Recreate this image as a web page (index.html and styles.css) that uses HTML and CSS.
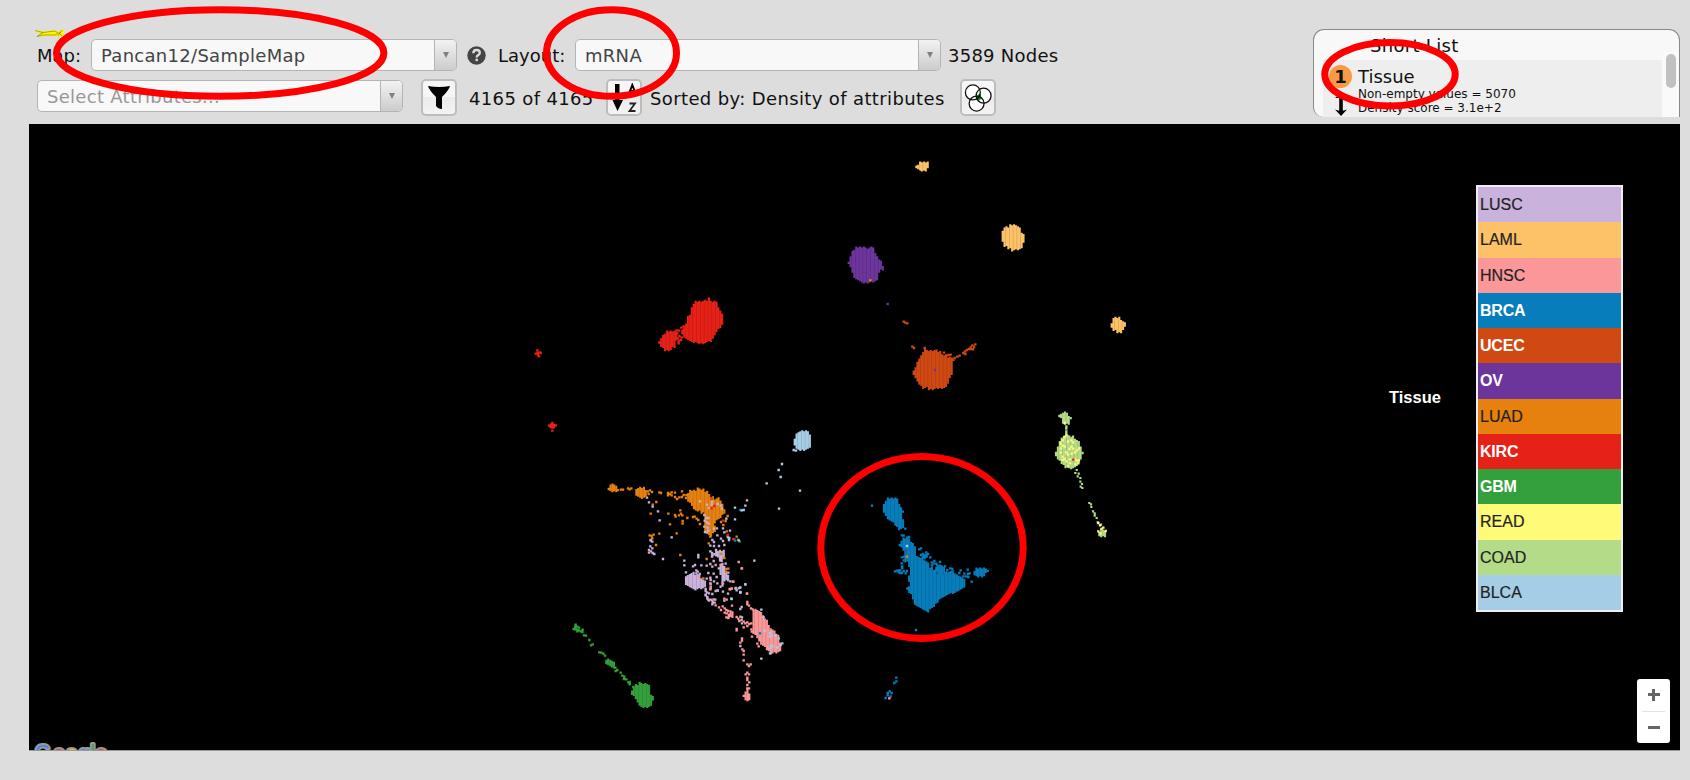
FILE: index.html
```html
<!DOCTYPE html>
<html lang="en">
<head>
<meta charset="utf-8">
<title>Tumor Map</title>
<link rel="stylesheet" href="styles.css">
</head>
<body>
<header class="header">
  <div class="controls">
    <svg class="logo" width="29" height="9" viewBox="0 0 29 9"><path d="M0 .5 8 2.500 20 1 23 3 27 0 29 1 28 7 24 8 20 7 8 7 2 8.500 5 5Z" fill="#fbf500"/><path d="M0 1.500 8 3.500 2 7.500 8 6 20 6 26 3M8 3.500 20 2 23 4M23 7 27 1M24 4 27 7" fill="none" stroke="#77751b" stroke-width=".6"/></svg>
    <div class="row">
      <span class="label label-map">Map:</span>
      <div class="select"><span class="value">Pancan12/SampleMap</span><span class="trigger"><i class="caret"></i></span></div>
      <svg class="help" width="19" height="19" viewBox="0 0 19 19"><circle cx="9.500" cy="9.500" r="9.200" fill="#454545"/><path d="M6.300 7.200Q6.300 4 9.600 4 12.800 4 12.800 6.700 12.800 8.200 11 9.200 9.700 10 9.700 11.400" fill="none" stroke="#ddd" stroke-width="2.300"/><path d="M8.500 12.700h2.400v2.400H8.500z" fill="#ddd"/></svg>
      <span class="label label-layout">Layout:</span>
      <div class="select"><span class="value">mRNA</span><span class="trigger"><i class="caret"></i></span></div>
      <span class="label nodes">3589 Nodes</span>
    </div>
    <div class="row row-attributes">
      <div class="select"><span class="value placeholder">Select Attributes...</span><span class="trigger"><i class="caret"></i></span></div>
      <div class="button filter"><svg width="24" height="25" viewBox="0 0 24 25"><path d="M1 1Q12 3 23 1 22 5 15 12V24Q11 24 9 21V12Q2 5 1 1Z"/></svg></div>
      <span class="label count">4165 of 4165</span>
      <div class="button"><svg width="28" height="30" viewBox="0 0 28 30"><path d="M5 1h4.500v16h3.500L7.500 28 2.500 17H5z"/><path d="M19 10.500 22.300 2 25.600 10.500M20 8h4.600" fill="none" stroke="#000" stroke-width="2"/><path d="M19.500 20.500h5.500L19.500 28h6" fill="none" stroke="#222" stroke-width="1.800"/></svg></div>
      <span class="label sorted">Sorted by: Density of attributes</span>
      <div class="button"><svg width="28" height="28" viewBox="0 0 30 30"><g fill="#fff"><circle cx="9.500" cy="9" r="8"/><circle cx="21" cy="12.500" r="8"/><circle cx="13.500" cy="21" r="8"/></g><path d="M12.500 13.500 17.500 10 19 15.500 15 18.500Z" fill="#0a960f"/><g fill="none" stroke="#111" stroke-width="1.400"><circle cx="9.500" cy="9" r="8"/><circle cx="21" cy="12.500" r="8"/><circle cx="13.500" cy="21" r="8"/></g></svg></div>
    </div>
  </div>
  <section class="shortlist">
    <h2 class="shortlist-title">Short List</h2>
    <div class="entry">
      <div class="rank"><span class="badge">1</span><svg width="14" height="22" viewBox="0 0 14 22"><path d="M7 2v15" stroke="#000" stroke-width="3.600"/><path d="M1 4 7 0 13 4ZM1 15.500Q7 18 13 15.500L7 22Z"/></svg></div>
      <div class="details"><div class="name">Tissue</div><div class="stat">Non-empty values = 5070</div><div class="stat">Density score = 3.1e+2</div></div>
    </div>
    <div class="scroll"><div class="thumb"></div></div>
  </section>
</header>
<main class="map">
  <svg class="samples" id="samples" width="1651" height="626" viewBox="29 124 1651 626"></svg>
  <div class="legend">
    <div class="legend-title">Tissue</div>
    <ul class="swatches">
      <li class="lusc">LUSC</li><li class="laml">LAML</li><li class="hnsc">HNSC</li><li class="brca light">BRCA</li>
      <li class="ucec light">UCEC</li><li class="ov light">OV</li><li class="luad">LUAD</li><li class="kirc light">KIRC</li>
      <li class="gbm light">GBM</li><li class="read">READ</li><li class="coad">COAD</li><li class="blca">BLCA</li>
    </ul>
  </div>
  <svg class="google" width="85" height="11" viewBox="0 0 85 11"><g><text x="4" y="19.500" fill="#4285f4">G</text><text x="22.500" y="20.500" fill="#ea4335">o</text><text x="35" y="20.500" fill="#fbbc05">o</text><text x="47.500" y="20.500" fill="#4285f4">g</text><text x="59.500" y="19.500" fill="#34a853">l</text><text x="64.500" y="20.500" fill="#ea4335">e</text></g></svg>
  <div class="zoom"><span class="plus"></span><span class="minus"></span></div>
</main>
<svg class="marks" width="1690" height="780" viewBox="0 0 1690 780"><ellipse cx="220.200" cy="53" rx="163.700" ry="43.300"/><ellipse cx="611.500" cy="53" rx="65" ry="43.300"/><ellipse cx="1390" cy="74.200" rx="65.200" ry="31.700"/><ellipse cx="922" cy="547.400" rx="101.200" ry="91"/></svg>
<script src="map.js"></script>
</body>
</html>
```

FILE: styles.css
```css
* { box-sizing: border-box; }
body { margin: 0; width: 1690px; height: 780px; overflow: hidden; background: #ddd; font-family: "DejaVu Sans", Verdana, sans-serif; font-size: 18px; color: #111; position: relative; }
.header { display: flex; justify-content: space-between; height: 124px; padding: 29px 10px 0 35px; }
.controls { width: 1080px; }
.logo { display: block; height: 9px; }
.row { display: flex; align-items: center; height: 32px; margin-top: 1px; padding-left: 2px; }
.row-attributes { height: 37px; margin-top: 8px; }
.label { white-space: nowrap; line-height: 32px; padding-top: 2px; }
.label-map { width: 54px; }
.select { display: flex; width: 366px; height: 32px; border: 1.500px solid #b4b4b4; border-radius: 5px; background: #f8f8f8; overflow: hidden; flex: none; }
.value { flex: 1; padding-left: 9px; line-height: 31px; color: #444; letter-spacing: .29px; }
.placeholder { color: #999; }
.trigger { width: 22px; border-left: 1px solid #b4b4b4; background: linear-gradient(#f2f2f2, #ccc); display: flex; align-items: center; justify-content: center; }
.caret { border: 3.500px solid transparent; border-top: 6px solid #808080; border-bottom: 0; }
.help { margin: 1px 12px 0 10px; flex: none; }
.label-layout { width: 77px; }
.nodes { margin-left: 7px; letter-spacing: .25px; }
.row-attributes .select { align-self: flex-start; margin-top: 1px; }
.button { width: 36px; height: 37px; border: 2px solid #bdbdbd; border-radius: 5px; background: linear-gradient(#f6f6f6 50%, #ebebeb 50%, #f3f3f3); display: flex; align-items: center; justify-content: center; flex: none; }
.filter { margin-left: 18px; }
.count { width: 137px; margin-left: 12px; letter-spacing: .35px; }
.row-attributes .label { padding-top: 3px; }
.sorted { width: 311px; margin-left: 7px; padding-left: 1px; letter-spacing: .37px; }
.shortlist { position: relative; width: 367px; height: 88px; border: 1px solid #888; border-bottom: 0; border-radius: 11px 11px 0 10px; background: #f8f8f8; padding: 0 17px 0 9px; overflow: hidden; }
.shortlist-title { margin: 0; padding: 5px 0 0 47px; height: 30px; font-size: 18px; line-height: 22px; font-weight: normal; letter-spacing: .3px; }
.entry { display: flex; height: 58px; background: #eee; }
.rank { width: 35px; display: flex; flex-direction: column; align-items: center; padding-top: 5px; }
.badge { width: 23px; height: 23px; border-radius: 50%; background: #fb9a44; font-weight: bold; line-height: 23px; text-align: center; margin-bottom: 6px; flex: none; }
.rank svg { flex: none; }
.name { line-height: 24px; padding-top: 5px; height: 27px; }
.stat { font-size: 12px; line-height: 14px; white-space: nowrap; }
.scroll { position: absolute; right: 0; top: 22px; width: 16px; height: 66px; background: #fafafa; padding: 2px 3px; }
.thumb { width: 10px; height: 34px; border-radius: 5px; background: #c1c1c1; }
.map { position: relative; margin-left: 29px; width: 1651px; height: 627px; background: #000; border-bottom: 1px solid #999; }
.samples { display: block; }
.legend { position: absolute; right: 57px; top: 61px; display: flex; align-items: center; font-family: "Liberation Sans", Arial, sans-serif; font-size: 16px; }
.legend-title { width: 87px; padding-bottom: 2px; color: #fff; font-weight: bold; font-size: 16.500px; }
.swatches { list-style: none; margin: 0; padding: 0; width: 147px; height: 427px; border: 2px solid #eee; display: grid; grid-template-rows: repeat(12, 1fr); }
.swatches li { padding-left: 2px; line-height: 35px; color: #222; min-height: 0; -webkit-text-stroke: .2px; }
.swatches .light { color: #fff; font-weight: bold; -webkit-text-stroke: 0; letter-spacing: -.2px; }
.lusc { background: #c9b2db; } .laml { background: #fdc168; } .hnsc { background: #fb9799; } .brca { background: #087dbb; }
.ucec { background: #d04912; } .ov { background: #6b359b; } .luad { background: #e6800f; } .kirc { background: #e62117; }
.gbm { background: #33a03c; } .read { background: #fffa77; } .coad { background: #b3db88; } .blca { background: #a5cee6; }
.google { position: absolute; left: 2px; bottom: 0; }
.google g { font: 20px "Liberation Sans", Arial, sans-serif; stroke: #999; stroke-width: 4px; paint-order: stroke; stroke-linejoin: round; }
.zoom { position: absolute; right: 10px; top: 555px; width: 33px; height: 64px; border-radius: 3px; background: #fff; padding: 0 5px; display: flex; flex-direction: column; }
.zoom span { flex: 1; display: block; background: linear-gradient(#666, #666) center / 12px 3px no-repeat; }
.zoom .plus { border-bottom: 1px solid #e2e2e2; background: linear-gradient(#666, #666) center / 12px 3px no-repeat, linear-gradient(#666, #666) center / 3px 12px no-repeat; }
.marks { position: absolute; left: 0; top: 0; pointer-events: none; }
.marks ellipse { fill: none; stroke: #f00; stroke-width: 7; }
```

FILE: map.js
```js
// Each region holds blobs (outlines) and single nodes, in units of a third of a pixel.
const C = { lusc: '#c9b2db', laml: '#fdc168', hnsc: '#fb9799', brca: '#087dbb', ucec: '#d04912', ov: '#6b359b',
  luad: '#e6800f', kirc: '#e62117', gbm: '#33a03c', read: '#fffa77', coad: '#b3db88', blca: '#a5cee6' };
const regions = [
  { at: [500, 270], items: [
    ['kirc', 'b', '545,178 562,160 562,138 572,135 572,118 580,106 587,97 600,92 622,88 628,84 631,92 650,94 651,108 662,120 672,148 664,170 648,188 634,216 600,221 568,214 550,202'],
    ['kirc', 'b', '476,215 497,185 525,183 530,189 530,210 525,230 510,241 490,239 480,228'],
    ['kirc', 'd', '530,181 537,182 544,173 551,169 532,190 549,181 555,178 538,198 545,202 533,205 536,213 536,220 543,210'],
    ['kirc', 'd', '107,251 112,241 113,249 119,247 114,255 117,259 122,249 147,467 152,464 152,471 157,459 157,466 157,473 162,465 162,471 168,466 157,482']
  ]},
  { at: [820, 150], items: [
    ['laml', 'b', '287,49 301,36 324,38 324,52 316,63 298,63'],
    ['laml', 'd', '292,50 303,41 319,42 319,49 303,59 313,58'],
    ['laml', 'b', '546,238 576,224 596,230 616,262 603,296 581,304 554,289 547,272'],
    ['laml', 'b', '881,502 900,502 904,512 918,522 914,537 898,549 878,539 873,520'],
    ['ov', 'b', '84,336 105,291 163,291 166,309 190,346 190,358 178,367 169,393 134,401 104,384'],
    ['ov', 'd', '203,462'], ['luad', 'd', '151,391'],
    ['ucec', 'd', '251,515 256,518 262,520 277,590 282,594 314,594 349,602 372,608 380,617 386,615 392,614 404,624 412,620 419,617'],
    ['ucec', 'b', '279,665 298,625 314,598 360,606 374,616 401,624 400,660 378,711 340,721 303,710 288,687'],
    ['ucec', 'd', '430,609 435,604 441,600 436,612 447,597 452,592 457,586 452,597 462,591 466,583 459,598'], ['ov', 'd', '345,660']
  ]},
  { at: [590, 420], items: [
    ['luad', 'b', '60,192 76,192 77,201 87,203 86,216 63,216 54,206'],
    ['luad', 'b', '137,202 165,202 170,218 168,230 154,239 137,225'],
    ['luad', 'd', '93,209 99,209 114,205 119,208 124,205 173,214 180,211 186,216 176,222 208,217 213,219 234,219 240,222 245,217 234,226 245,226 255,218 261,237 268,232 276,231 281,225 288,234 276,214 255,231 188,254 199,246 182,281 235,281 271,271 255,285 257,290 267,286 277,286 273,281 292,294 278,303 278,311 240,313 179,346 185,348 191,344 208,341 187,355 182,362 198,375 260,340 271,405 413,288 407,303 400,315 361,350 356,370 350,417 440,350 410,334'],
    ['luad', 'b', '287,220 326,204 352,215 359,227 393,240 405,270 399,286 374,307 376,331 362,351 346,331 341,290 350,284 314,270 295,246'],
    ['luad', 'd', '314,290 320,296 325,300 309,291 330,312 386,286 393,306'],
    ['kirc', 'd', '365,236 373,258 365,265 399,302 412,348 430,357'],
    ['lusc', 'd', '171,233 177,247 188,260 204,274 209,301 245,352 182,360 187,365 181,379 187,385 177,390 183,394 188,399 193,402 219,417 283,422 330,244 366,246 351,254 365,254 383,252 392,257 396,266 343,285 349,294 355,294 344,302 351,307 356,311 343,320 353,323 355,332 345,336 351,338 372,326 381,325 399,325 420,332 382,346 367,360 372,366 361,377 372,378 393,356 399,363 403,375 387,378 378,390 382,397 366,399 466,257 471,241'],
    ['lusc', 'b', '365,405 382,392 403,391 405,415 393,425 383,411'],
    ['lusc', 'b', '384,440 394,430 408,439 405,454 418,467 416,480 401,485 402,502 391,502 394,475'],
    ['lusc', 'b', '286,470 310,457 335,474 351,484 347,496 335,508 307,507 286,492'],
    ['lusc', 'd', '319,451 319,460 325,405 325,412 309,439 334,436 350,437 361,432 366,410 371,423 288,457 329,462 355,459 361,473 350,476 362,480 361,490 371,461 380,471 372,484 382,490 362,500 377,513 347,507 351,517 357,520 347,524 352,531 355,539 383,511 399,515 421,484 437,506 446,505 440,511 403,460 391,422 407,431 415,458 367,440 414,521 451,518'],
    ['hnsc', 'd', '356,264 367,404 377,435 393,434 446,426 456,445 430,485 419,507 425,506 361,508 403,536 471,521 177,398 324,471 371,538'],
    ['luad', 'd', '393,402 403,414 409,447 415,446 408,456 340,475'],
    ['kirc', 'd', '413,345 433,358'], ['gbm', 'd', '444,359 449,364'], ['brca', 'd', '451,270 435,362'],
    ['blca', 'd', '435,263 455,271 461,270 409,296 435,298 403,337 414,352 417,360 418,354 446,361 361,394 283,436 493,422 466,493 450,503 451,517 424,536 530,190 567,266 630,212 572,171 566,150 576,132'],
    ['blca', 'b', '612,68 615,45 632,32 655,34 665,48 664,70 655,87 635,94 617,87'],
    ['blca', 'd', '611,90 618,92'], ['lusc', 'd', '642,46']
  ]},
  { at: [560, 560], items: [
    ['lusc', 'd', '437,93 437,106 442,116 447,122 452,119 458,126 457,133 464,128 466,119 473,92 457,102 527,84 541,82 545,141 541,147 493,122 541,258 546,190 405,15 413,35'],
    ['hnsc', 'd', '452,72 452,85 510,88 515,86 545,25 519,65 489,71 561,101 457,121 467,136 477,142 483,150 488,139 494,145 499,150 494,158 500,160 505,153 499,172 505,174 516,137 500,119 562,126 562,133 567,137 573,145 578,148'],
    ['hnsc', 'b', '504,162 514,149 524,162 517,174 507,172'],
    ['hnsc', 'd', '530,171 535,176 541,170 538,183 545,180 551,185 551,202 530,207 530,211 556,190 562,187 568,192 574,190 562,198 546,235 546,242 541,248 547,268 551,273 551,284 551,301 562,313 567,318 572,313 562,338 557,343 567,343 562,353 562,360 568,367 562,375 562,385 567,385'],
    ['hnsc', 'b', '576,153 590,148 608,160 612,176 626,181 626,199 640,207 655,229 665,264 655,280 633,281 605,255 590,231 573,214 580,190'],
    ['hnsc', 'd', '592,251 596,259 576,230 574,208'],
    ['hnsc', 'b', '549,409 560,386 573,403 571,412 561,428 555,413'],
    ['blca', 'd', '515,117 541,96 556,73 604,149 611,172 546,172 614,212 630,219 630,230 635,226 656,235 667,250 662,255 632,257 638,259 630,265 651,262 604,296 630,280 646,226'],
    ['brca', 'd', '600,220'],
    ['gbm', 'd', '41,207 47,194 46,201 46,208 52,200 52,208 57,203 57,211 52,214 62,214 68,209 67,216 72,226 78,227 88,240 93,256 98,253 118,277 124,278 130,281 135,287 166,323 167,333 172,330 182,338 187,347 193,350 192,357 199,358 205,367 209,373 209,366 220,381'],
    ['gbm', 'b', '137,294 160,302 166,325 152,323 139,310'],
    ['gbm', 'b', '217,384 243,367 271,376 273,400 281,410 275,432 264,442 237,440 230,421 214,401']
  ]},
  { at: [810, 440], items: [
    ['brca', 'b', '220,190 236,174 264,176 270,203 280,210 277,230 285,239 283,257 275,272 255,257 253,246 235,240 221,213'],
    ['brca', 'b', '267,311 283,294 297,296 315,318 320,347 334,354 345,361 355,367 358,382 379,390 385,403 432,398 450,409 467,417 467,440 433,460 400,468 366,506 350,516 329,503 310,487 304,463 291,446 301,430 294,411 302,402 296,370 284,362 286,345 274,320'],
    ['brca', 'b', '379,390 377,383 385,375 401,377 405,397 389,410'],
    ['brca', 'b', '486,399 502,384 531,384 535,394 524,410 500,409'],
    ['brca', 'd', '186,197 286,266 276,286 281,287 291,293 297,291 276,352 283,350 275,370 276,379 281,361 255,394 261,392 266,397 271,391 276,399 281,393 287,400 291,393 277,384 328,328 333,325 333,345 339,342 344,347 349,337 354,342 344,354 350,350 361,352 365,367 366,376 373,363 379,371 382,376 390,366 405,379 412,390 417,399 421,385 427,387 428,395 448,399 452,391 460,409 463,401 468,409 474,402 473,389 479,400 475,411 485,425 318,570 259,713 253,729 259,724 227,774 233,759 239,754 245,759 233,766 242,769 266,391 271,399 339,350 349,345 371,371 409,398'],
    ['blca', 'd', '291,318'], ['ov', 'd', '286,333'], ['luad', 'd', '291,350'], ['hnsc', 'd', '238,775']
  ]},
  { at: [1030, 400], items: [
    ['coad', 'b', '86,45 98,42 104,33 112,43 123,54 121,70 96,73 94,57'],
    ['coad', 'd', '109,79 109,86 109,94 109,101'],
    ['coad', 'b', '76,158 90,121 104,105 130,111 145,121 159,160 149,187 126,209 103,201 84,181'],
    ['read', 'd', '104,69 109,106 103,111 98,121 92,130 98,137 93,145 104,140 114,125 124,121 130,127 124,140 119,147 130,146 109,157 114,164 125,161 135,157 141,151 147,145 98,170 104,177 92,158 110,184 120,178 120,190 135,179 141,182 147,181 136,193 145,190 114,199 98,180'],
    ['kirc', 'd', '130,179'],
    ['coad', 's', '140,210 136,219 146,221 143,229 151,234 151,245 156,252 152,260 157,264 178,309 183,313 184,321 189,334 194,340 194,347 200,354 203,367 213,374 215,386'],
    ['coad', 'b', '206,390 229,390 229,409 208,409'],
    ['read', 'd', '205,369 210,376 205,394 220,383 227,393 214,388 212,400']
  ]}
];
const DX = 5.7, DY = 6.5;
const inside = (x, y, p) => {
  let hit = false;
  for (let i = 0, j = p.length - 1; i < p.length; j = i++) {
    const [a, b] = p[i], [c, d] = p[j];
    if ((b > y) !== (d > y) && x < (c - a) * (y - b) / (d - b) + a) hit = !hit;
  }
  return hit;
};
const node = (x, y, w, h) => `M${(x - w / 2).toFixed(1)} ${(y - h / 2).toFixed(1)}h${w}v${h}h${-w}z`;
let out = '';
for (const { at, items } of regions) {
  out += `<g transform="translate(${at}) scale(.33333)">`;
  for (const [tissue, kind, data] of items) {
    const points = data.split(' ').map(p => p.split(',').map(Number));
    let path = '', shade = '';
    if (kind === 'b') {
      const xs = points.map(p => p[0]), ys = points.map(p => p[1]);
      const x0 = Math.min(...xs), x1 = Math.max(...xs), y0 = Math.min(...ys), y1 = Math.max(...ys);
      for (let c = 0, x = x0 + 2; x <= x1; x += DX, c++) {
        const jitter = (c * 7 % 5 - 2) * 1.2;
        for (let y = y0 + 2 + (c % 2) * DY / 2; y <= y1; y += DY)
          if (inside(x, y + jitter, points)) {
            path += node(x, y, 6.4, 7);
            if (c % 2) shade += node(x + 2.8, y, 1.8, 7);
          }
      }
    } else {
      const size = kind === 's' ? 6.5 : 7.2;
      for (const [x, y] of points) path += node(x, y, size, size);
    }
    out += `<path fill="${C[tissue]}" d="${path}"/>`;
    if (shade) out += `<path fill="#000" fill-opacity=".18" d="${shade}"/>`;
  }
  out += '</g>';
}
document.getElementById('samples').innerHTML = out;
```
